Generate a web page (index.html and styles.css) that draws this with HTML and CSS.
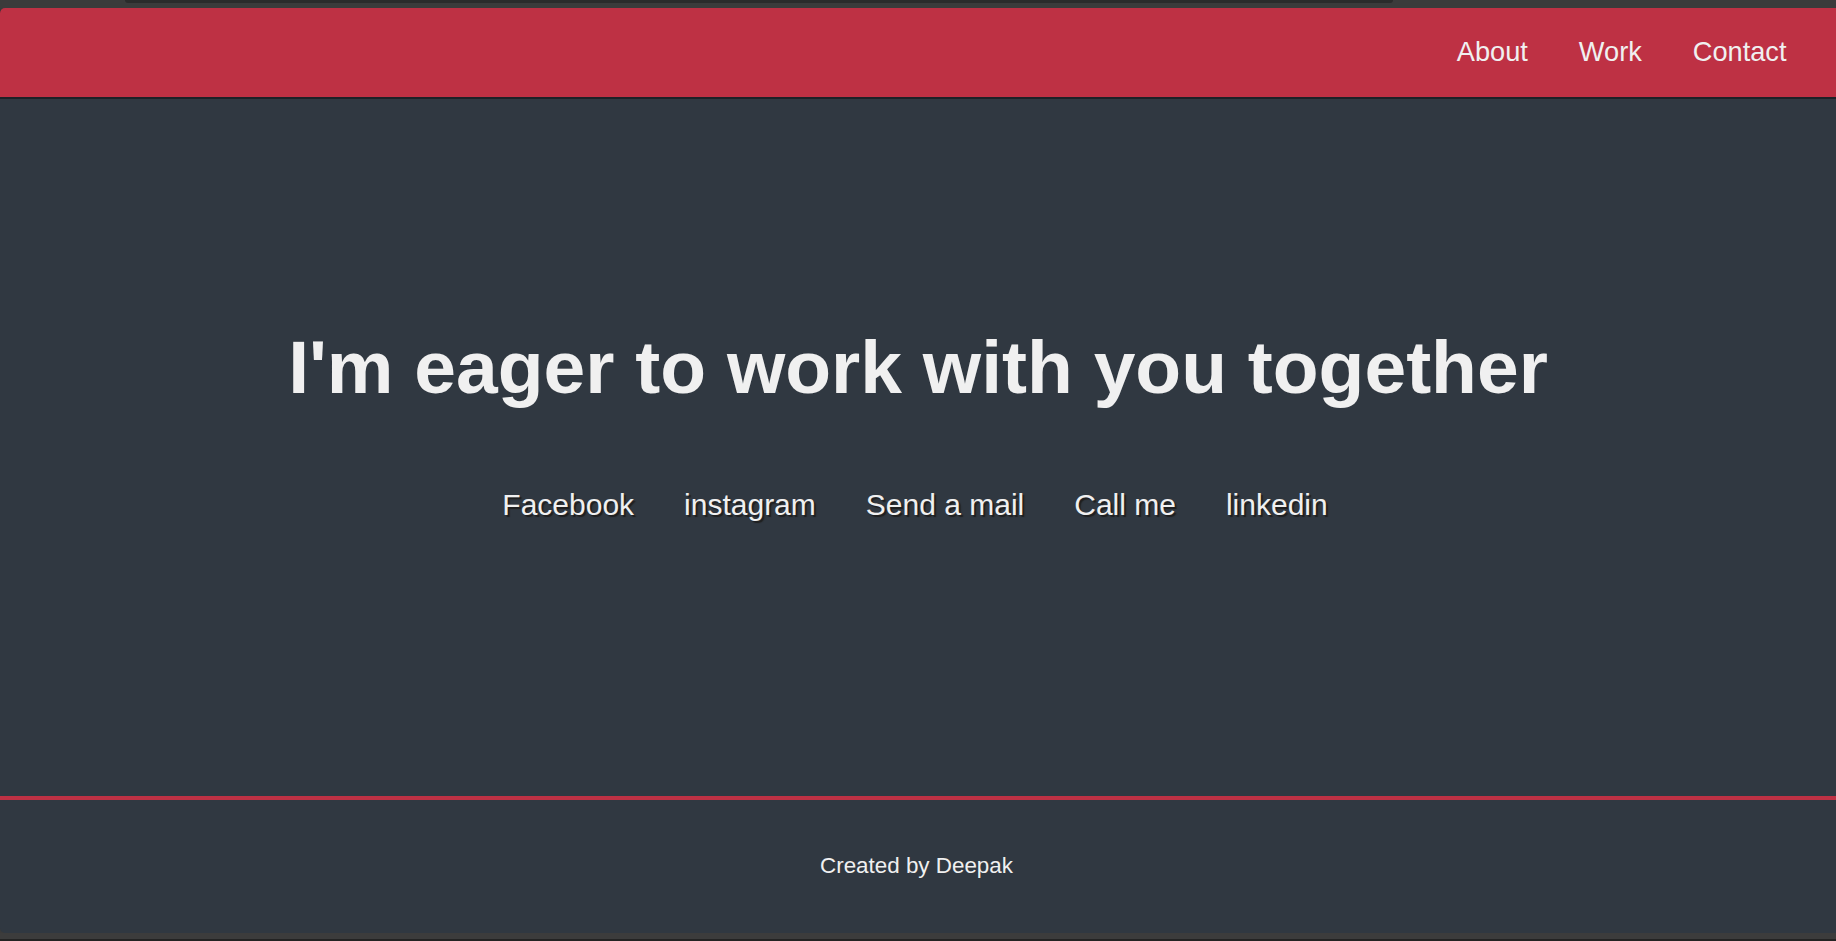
FILE: index.html
```html
<!DOCTYPE html>
<html lang="en">
<head>
<meta charset="utf-8">
<title>Deepak - Portfolio</title>
<link rel="stylesheet" href="styles.css">
</head>
<body>
<div class="topstrip"><div class="topbar"></div></div>
<div class="page">
  <nav class="nav">
    <ul class="nav-list">
      <li><a class="nav-link" href="#about">About</a></li>
      <li><a class="nav-link" href="#work">Work</a></li>
      <li><a class="nav-link" href="#contact">Contact</a></li>
    </ul>
  </nav>
  <section class="contact" id="contact">
    <h2 class="contact-title">I'm eager to work with you together</h2>
    <ul class="social">
      <li><a class="social-link" href="#">Facebook</a></li>
      <li><a class="social-link" href="#">instagram</a></li>
      <li><a class="social-link" href="#">Send a mail</a></li>
      <li><a class="social-link" href="#">Call me</a></li>
      <li><a class="social-link" href="#">linkedin</a></li>
    </ul>
  </section>
  <footer class="footer">
    <p class="footer-text">Created by Deepak</p>
  </footer>
</div>
<div class="bottomstrip"></div>
</body>
</html>
```
FILE: styles.css
```css
* { box-sizing: border-box; }
html, body { margin: 0; padding: 0; }
body {
  background: #3a3a3a;
  font-family: "Liberation Sans", Arial, sans-serif;
  color: #f0f0f0;
  overflow: hidden;
}
.topstrip {
  height: 8px;
  background: #3b3b3b;
  padding-left: 125px;
}
.topbar {
  width: 1268px;
  height: 3px;
  background: #2b2b2b;
  border-radius: 0 0 6px 6px;
}
.page {
  background: #303841;
  border-radius: 5px 0 0 5px;
  overflow: hidden;
}
.nav {
  position: relative;
  z-index: 1;
  height: 89px;
  background: #be3144;
  box-shadow: 0 2px 0 rgba(0, 0, 0, 0.4);
  display: flex;
  justify-content: flex-end;
  align-items: center;
  padding-right: 24px;
  padding-bottom: 2px;
}
.nav-list {
  list-style: none;
  margin: 0;
  padding: 0;
  display: flex;
}
.nav-link {
  display: block;
  padding: 0 25.5px;
  font-size: 27.2px;
  color: #f0f0f0;
  text-decoration: none;
}
.contact {
  height: 699px;
  padding-top: 227px;
  display: flex;
  flex-direction: column;
  align-items: center;
}
.contact-title {
  margin: 0;
  font-size: 75px;
  font-weight: 700;
  line-height: 86px;
  color: #f0f0f0;
}
.social {
  list-style: none;
  margin: 78px 0 0;
  padding: 0;
  display: flex;
  transform: translateX(-3px);
}
.social-link {
  display: block;
  padding: 0 25px;
  font-size: 30px;
  color: #f0f0f0;
  text-decoration: none;
  text-shadow: 2px 2px 1px #1f1f1f;
}
.footer {
  height: 137px;
  border-top: 4px solid #be3144;
  padding-top: 53px;
  text-align: center;
}
.footer-text {
  margin: 0;
  font-size: 22.4px;
  padding-right: 3px;
}
.bottomstrip {
  height: 8px;
  background: #3c3c3c;
  border-bottom: 2px solid #232323;
}
```
